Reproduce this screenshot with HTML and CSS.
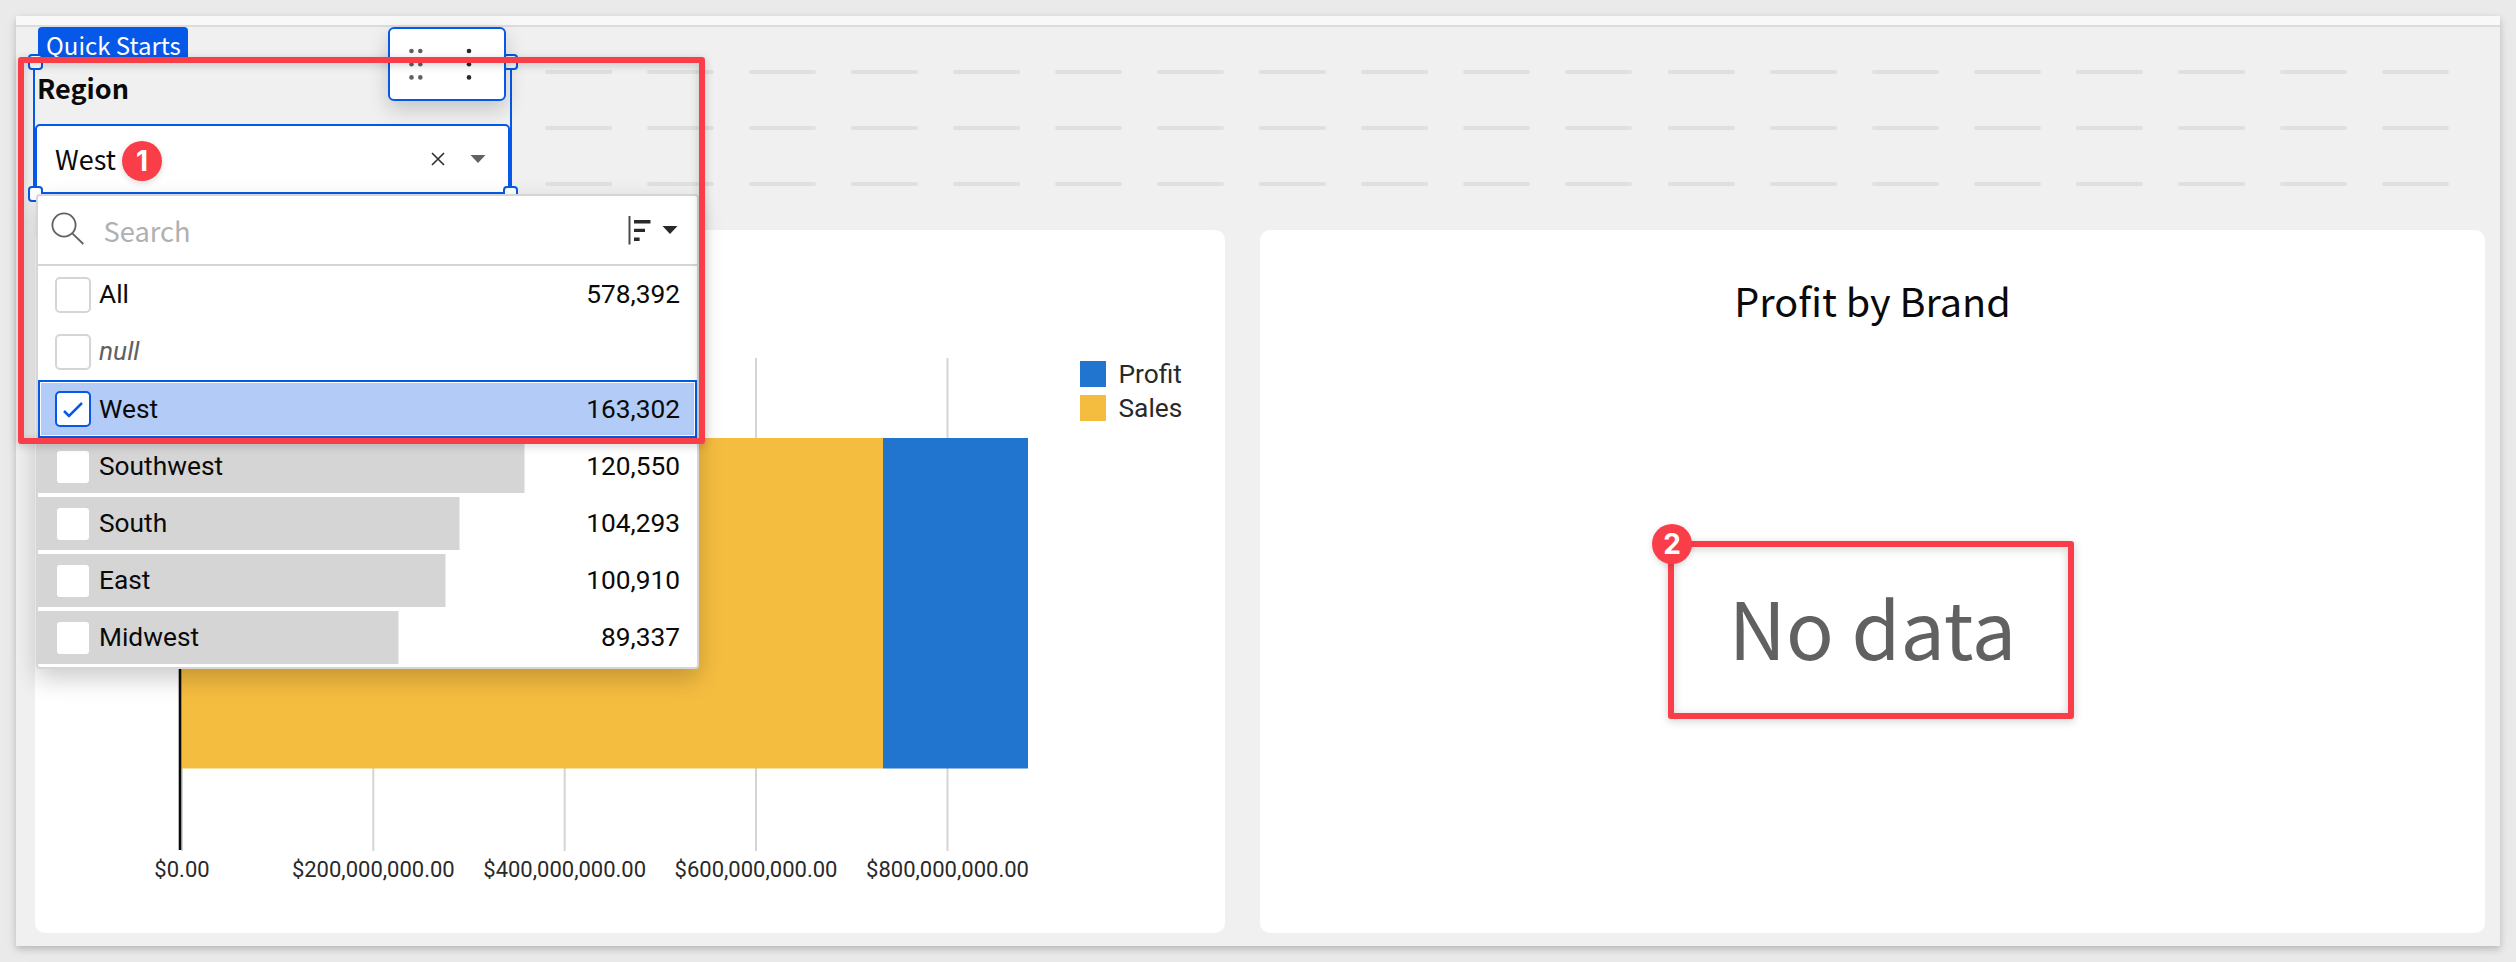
FILE: index.html
```html
<!DOCTYPE html>
<html lang="en">
<head>
<meta charset="utf-8">
<title>Quick Starts</title>
<link rel="stylesheet" href="styles.css">
</head>
<body>
<main class="page">
  <div class="page-header"></div>
  <section class="strip">
    <div class="control">
      <span class="tag">Quick Starts</span>
      <div class="control-label">Region</div>
      <div class="select">
        <span class="select-value">West</span>
        <svg class="clear" width="14" height="14" viewBox="0 0 14 14"><path d="M1 1l12 12M13 1L1 13"/></svg>
        <svg class="caret" width="16" height="8" viewBox="0 0 16 8"><path d="M.5 0h15L8 8z"/></svg>
      </div>
      <i class="handle nw"></i><i class="handle ne"></i><i class="handle sw"></i><i class="handle se"></i>
      <div class="toolbar">
        <svg width="114" height="70" viewBox="0 0 114 70">
          <g fill="#616161"><circle cx="21.5" cy="22" r="2.3"/><circle cx="30.3" cy="22" r="2.3"/><circle cx="21.5" cy="35.2" r="2.3"/><circle cx="30.3" cy="35.2" r="2.3"/><circle cx="21.5" cy="48.4" r="2.3"/><circle cx="30.3" cy="48.4" r="2.3"/></g>
          <g fill="#292929"><circle cx="79" cy="22" r="2.3"/><circle cx="79" cy="35.2" r="2.3"/><circle cx="79" cy="48.4" r="2.3"/></g>
        </svg>
      </div>
      <div class="dropdown">
        <div class="search">
          <svg class="search-icon" width="34" height="34" viewBox="0 0 34 34"><circle cx="13" cy="13" r="11.6"/><path d="M21.3 21.3L32.3 32"/></svg>
          <span class="search-text">Search</span>
          <svg class="sort" width="50" height="30" viewBox="0 0 50 30"><path fill="#4a4a4a" d="M.5 1h2v28.500h-2z"/><path fill="#292929" d="M6 5h16.500v3.400H6zM6 13.700h11v3.400H6zM6 22.500h5.600v3.400H6zM34.500 11h15L42 19z"/></svg>
        </div>
        <div class="row"><i class="box"></i><span class="name">All</span><span class="count">578,392</span></div>
        <div class="row"><i class="box"></i><span class="name null">null</span></div>
        <div class="row selected"><i class="box"><svg width="32" height="32" viewBox="0 0 32 32"><path d="M7 18l5 5L25 10"/></svg></i><span class="name">West</span><span class="count">163,302</span></div>
        <div class="row bar" style="--w:486.500px"><i class="box"></i><span class="name">Southwest</span><span class="count">120,550</span></div>
        <div class="row bar" style="--w:421.500px"><i class="box"></i><span class="name">South</span><span class="count">104,293</span></div>
        <div class="row bar" style="--w:407.500px"><i class="box"></i><span class="name">East</span><span class="count">100,910</span></div>
        <div class="row bar" style="--w:360.500px"><i class="box"></i><span class="name">Midwest</span><span class="count">89,337</span></div>
      </div>
    </div>
    <div class="grid">
      <div class="dashes"><i></i><i></i><i></i><i></i><i></i><i></i><i></i><i></i><i></i><i></i><i></i><i></i><i></i><i></i><i></i><i></i><i></i><i></i><i></i></div>
      <div class="dashes"><i></i><i></i><i></i><i></i><i></i><i></i><i></i><i></i><i></i><i></i><i></i><i></i><i></i><i></i><i></i><i></i><i></i><i></i><i></i></div>
      <div class="dashes"><i></i><i></i><i></i><i></i><i></i><i></i><i></i><i></i><i></i><i></i><i></i><i></i><i></i><i></i><i></i><i></i><i></i><i></i><i></i></div>
    </div>
  </section>
  <section class="cards">
    <article class="card">
      <svg class="chart" width="1190" height="703" viewBox="35 230 1190 703">
        <g fill="#d5d5d5"><rect x="181" y="358" width="2" height="493"/><rect x="372.300" y="358" width="2" height="493"/><rect x="563.700" y="358" width="2" height="493"/><rect x="755" y="358" width="2" height="493"/><rect x="946.500" y="358" width="2" height="493"/></g>
        <rect x="181" y="438" width="702" height="330.500" fill="#f5bd40"/>
        <rect x="883" y="438" width="145" height="330.500" fill="#2175cf"/>
        <rect x="178.700" y="358" width="2.600" height="492" fill="#0a0a0a"/>
        <g class="ticks"><text x="182" y="877">$0.00</text><text x="373.300" y="877">$200,000,000.00</text><text x="564.700" y="877">$400,000,000.00</text><text x="756" y="877">$600,000,000.00</text><text x="947.500" y="877">$800,000,000.00</text></g>
        <rect x="1080" y="361" width="26" height="26" fill="#2175cf"/>
        <rect x="1080" y="395" width="26" height="26" fill="#f5bd40"/>
        <g class="legend"><text x="1118.500" y="383">Profit</text><text x="1118.500" y="417">Sales</text></g>
      </svg>
    </article>
    <article class="card brand">
      <h2>Profit by Brand</h2>
      <div class="nodata">No data</div>
    </article>
  </section>
</main>
<div class="mark one"></div><b class="badge b1">1</b>
<div class="mark two"></div><b class="badge b2">2</b>
</body>
</html>
```
FILE: styles.css
```css
* { box-sizing: border-box; }
body {
  margin: 0;
  padding: 16px;
  height: 962px;
  overflow: hidden;
  position: relative;
  background: #eaeaea;
  font-family: "Noto Sans CJK SC", "Noto Sans", sans-serif;
  color: #0a0a0a;
}
.page {
  height: 930px;
  background: #f0f0f0;
  box-shadow: 0 3px 7px rgba(0,0,0,.2), 0 4px 20px rgba(0,0,0,.03);
}
.page-header { height: 11px; background: #f8f8f8; border-bottom: 2px solid #dcdcdc; }
.strip { height: 203px; display: flex; padding-left: 17px; }
.control {
  position: relative;
  width: 479px;
  height: 134px;
  margin-top: 34px;
  border: 2px solid #0659e8;
  z-index: 2;
}
.tag {
  position: absolute;
  left: 3px; top: -36px;
  width: 150px; height: 35px;
  padding-left: 8px;
  border-radius: 4px 4px 0 0;
  background: #0659e8;
  color: #fff;
  font-size: 24px;
  line-height: 35px;
  white-space: nowrap;
}
.control-label { height: 61px; padding-left: 2px; font-size: 27px; font-weight: 700; line-height: 50px; }
.select {
  height: 70px;
  display: flex;
  align-items: center;
  padding: 0 22px 0 18px;
  border: 2px solid #0659e8;
  border-radius: 5px;
  background: #fff;
}
.select-value { flex: 1; font-size: 27px; line-height: 40px; }
.clear { margin-right: 25px; fill: none; stroke: #333; stroke-width: 1.7; }
.caret { fill: #616161; }
.handle { position: absolute; width: 15px; height: 16px; border: 2px solid #0659e8; border-radius: 4px; background: #fff; }
.nw { left: -7px; top: -9px; }
.ne { right: -8px; top: -9px; }
.sw { left: -7px; bottom: -9px; }
.se { right: -8px; bottom: -9px; }
.toolbar {
  position: absolute;
  left: 353px; top: -36px;
  width: 118px; height: 74px;
  border: 2px solid #0659e8;
  border-radius: 6px;
  background: #fff;
  box-shadow: 0 8px 20px rgba(0,0,0,.18);
}
.toolbar svg, .chart { display: block; }
.dropdown {
  position: absolute;
  left: 1px; top: 131px;
  width: 663px; height: 475px;
  border: 2px solid #d5d5d5;
  border-radius: 4px;
  background: #fff;
  box-shadow: 0 10px 24px rgba(0,0,0,.2);
}
.search { display: flex; align-items: center; height: 70px; padding: 0 19px 0 13px; border-bottom: 2px solid #d5d5d5; }
.search-icon { fill: none; stroke: #616161; stroke-width: 1.8; margin-top: -3px; }
.search-text { flex: 1; padding-left: 18.500px; font-size: 27.300px; line-height: 40px; color: #b0b0b0; }
.row {
  display: flex;
  align-items: center;
  height: 57px;
  padding: 0 17px;
  font: 26.300px/30px Roboto, sans-serif;
}
.bar { background: linear-gradient(#d5d5d5, #d5d5d5) 0 2px / var(--w) 53px no-repeat; }
.box { width: 36px; height: 36px; border: 2px solid #d5d5d5; border-radius: 5px; background: #fff; }
.name, .count { padding-bottom: 2px; }
.name { flex: 1; padding-left: 8px; }
.null { font-style: italic; color: #616161; }
.selected { height: 58px; padding: 0 14px; border: 2px solid #0659e8; background: #b3ccf7; box-shadow: inset 0 0 0 1px #fff; }
.selected .name, .selected .count { padding-bottom: 0; }
.selected .box { margin-left: 1px; border-color: #0659e8; }
.selected .count { margin-right: 1px; }
.box svg { display: block; fill: none; stroke: #0659e8; stroke-width: 2.5; }
.grid { flex: 1; display: flex; flex-direction: column; justify-content: space-between; margin: 43px 51px 44px 33px; }
.dashes { display: flex; justify-content: space-between; }
.dashes i { width: 67px; height: 4px; border-radius: 2px; background: #e0e0e0; }
.cards { display: flex; gap: 35px; padding: 0 15px 0 19px; }
.card { flex: none; width: 1190px; height: 703px; border-radius: 10px; background: #fff; }
.ticks { font: 22px Roboto, sans-serif; text-anchor: middle; fill: #292929; }
.legend { font: 26.300px Roboto, sans-serif; fill: #292929; }
.brand { width: 1225px; display: flex; flex-direction: column; align-items: center; }
.brand h2 { margin: 40px 0 0; font-size: 39.600px; font-weight: 400; line-height: 60px; }
.nodata { margin-top: 236px; font-size: 79px; line-height: 120px; color: #616161; }
.mark {
  position: absolute;
  border: 6px solid #f93e49;
  border-radius: 3px;
  z-index: 3;
  filter: drop-shadow(0 2px 4px rgba(0,0,0,.2));
}
.one { left: 18px; top: 57px; width: 687px; height: 387px; }
.two { left: 1668px; top: 541px; width: 406px; height: 178px; }
.badge {
  position: absolute;
  z-index: 4;
  width: 40px; height: 40px;
  border-radius: 50%;
  background: #f93e49;
  color: #fff;
  font: 700 28px/40px Inter, sans-serif;
  text-align: center;
  box-shadow: 0 2px 6px rgba(0,0,0,.15);
}
.b1 { left: 122px; top: 141px; }
.b2 { left: 1652px; top: 524px; }
```
